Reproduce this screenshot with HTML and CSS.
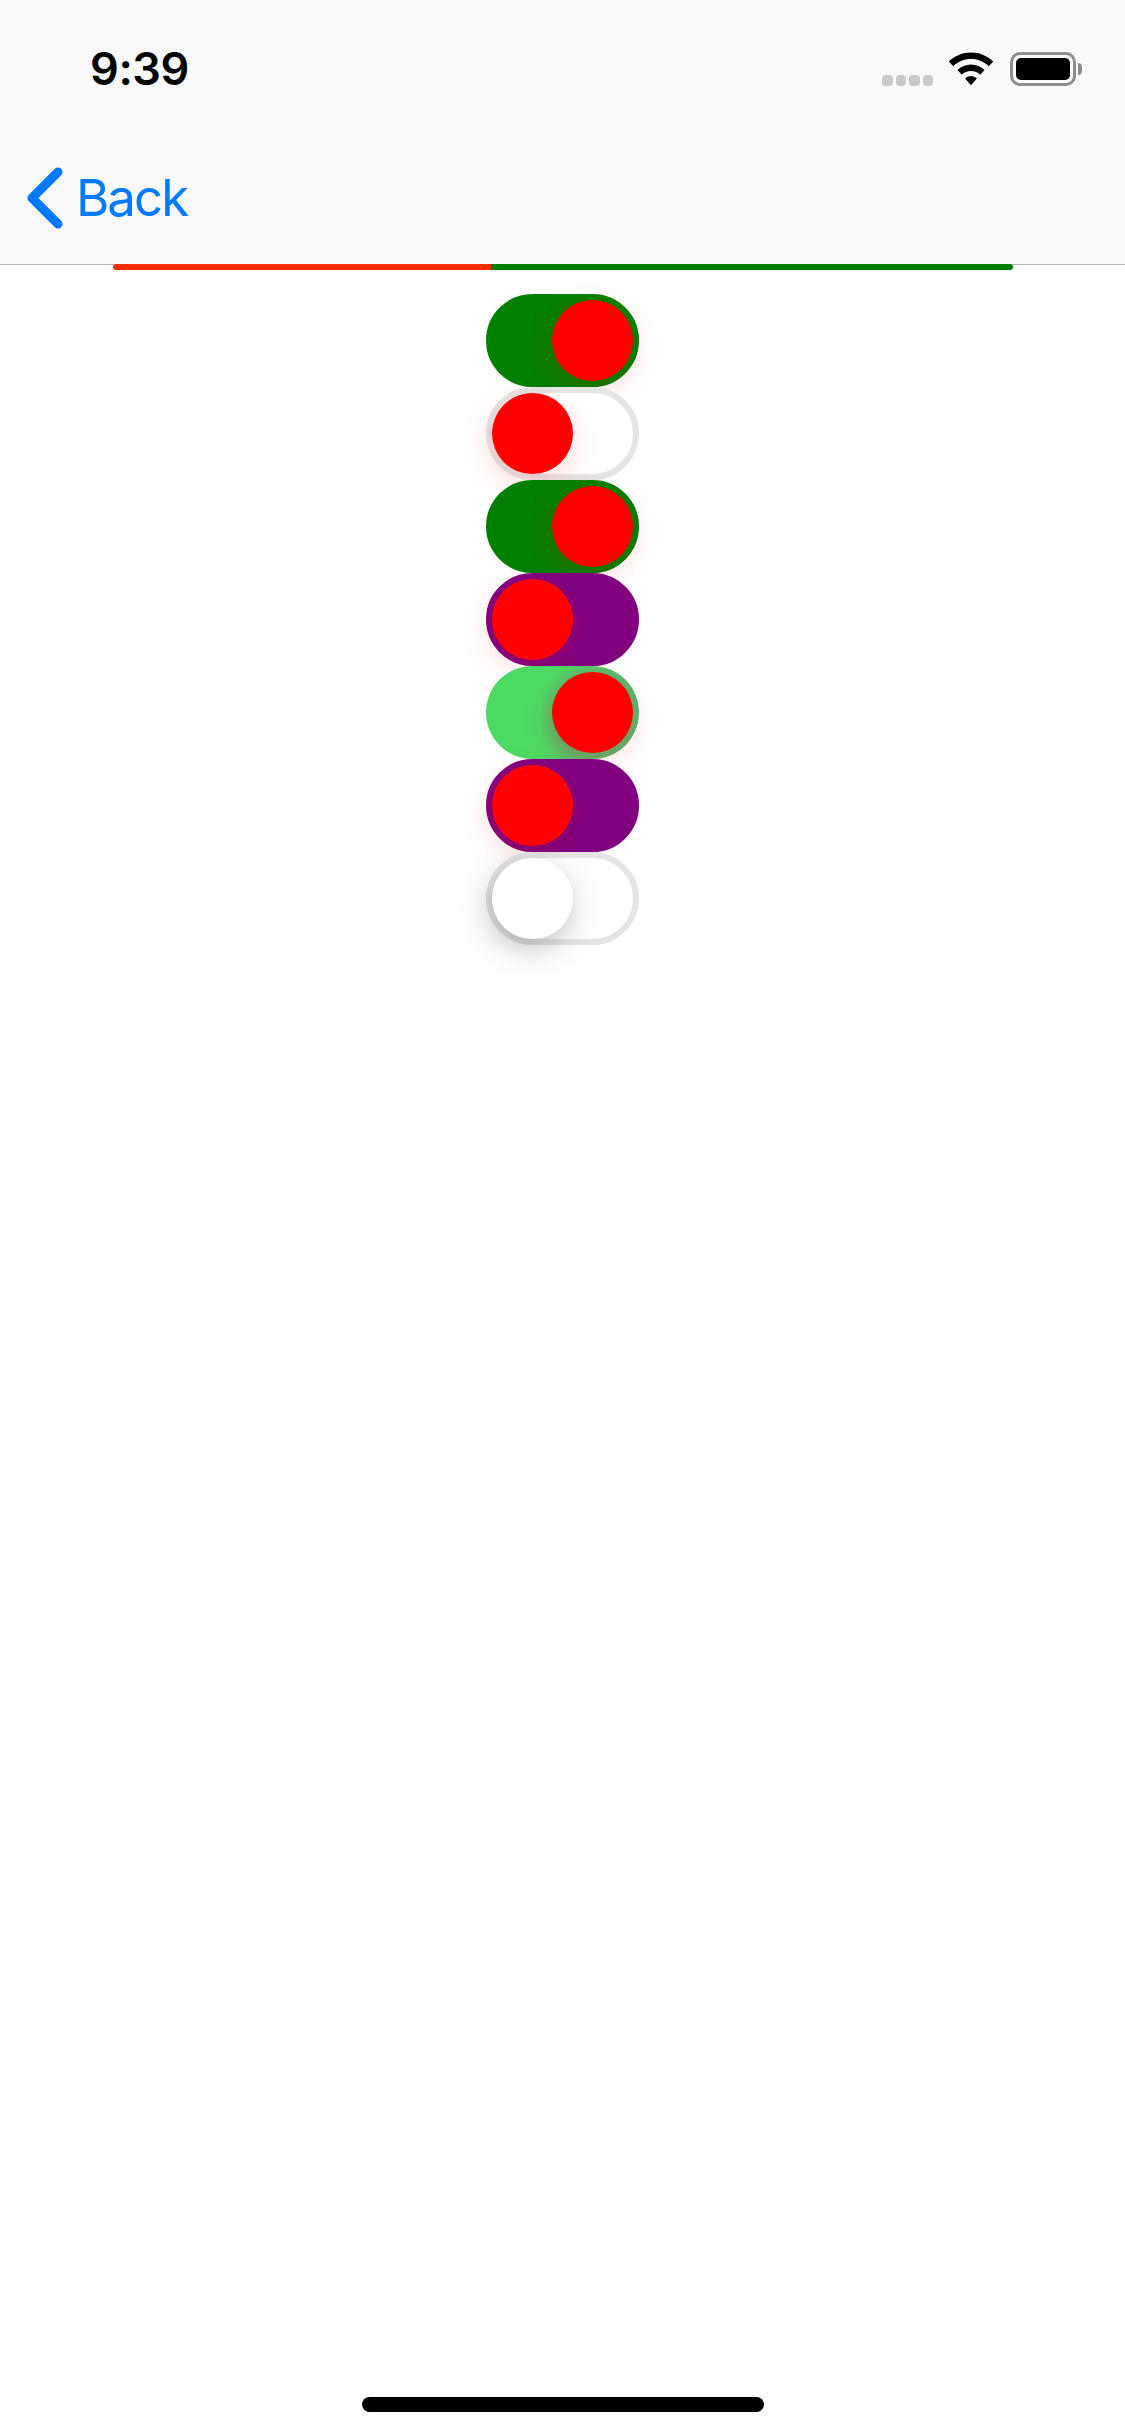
FILE: index.html
```html
<!DOCTYPE html>
<html lang="en">
<head>
<meta charset="utf-8">
<title>Switches</title>
<link rel="stylesheet" href="styles.css">
</head>
<body>
<div class="screen">
  <header class="header">
    <div class="status">
      <span class="time">9:39</span>
      <div class="status-icons">
        <div class="signal"><i></i><i></i><i></i><i></i></div>
        <svg class="wifi" width="46" height="34" viewBox="0 0 46 34"><path d="M23 0.5C14.4 0.5 6.6 3.9 0.8 9.4L5.2 14.2C9.8 9.8 16 7.1 23 7.1C30 7.1 36.200 9.8 40.800 14.200L45.200 9.400C39.400 3.900 31.600 0.500 23 0.500Z"/><path d="M23 12.500C17.800 12.500 13 14.600 9.400 18L13.800 22.700C16.200 20.400 19.400 19.100 23 19.100C26.600 19.100 29.800 20.400 32.200 22.700L36.600 18C33 14.600 28.200 12.500 23 12.500Z"/><path d="M23 24C20.700 24 18.600 24.900 17.100 26.400L23 33.200L28.900 26.400C27.400 24.900 25.300 24 23 24Z"/></svg>
        <div class="battery"><div class="battery-body"><div class="battery-fill"></div></div><div class="battery-tip"></div></div>
      </div>
    </div>
    <div class="nav">
      <svg class="chevron" width="42" height="66" viewBox="0 0 42 66"><path d="M35 7L9 33L35 59" fill="none" stroke="#007aff" stroke-width="9" stroke-linecap="round" stroke-linejoin="round"/></svg>
      <span class="back">Back</span>
    </div>
  </header>
  <main class="content">
    <div class="progress"><div class="progress-red"></div><div class="progress-green"></div></div>
    <div class="switches">
      <div class="track on green"><div class="knob red"></div></div>
      <div class="track off blank"><div class="knob red"></div></div>
      <div class="track on green"><div class="knob red"></div></div>
      <div class="track off purple"><div class="knob red"></div></div>
      <div class="track on mint"><div class="knob red"></div></div>
      <div class="track off purple"><div class="knob red"></div></div>
      <div class="track off blank"><div class="knob white"></div></div>
    </div>
  </main>
  <div class="home-area"><div class="home-indicator"></div></div>
</div>
</body>
</html>
```
FILE: styles.css
```css
* { box-sizing: border-box; }
html, body { margin: 0; padding: 0; background: #fff; }
.screen { width: 1125px; height: 2436px; display: flex; flex-direction: column; overflow: hidden; }
.header { height: 265px; background: #f9f9f9; border-bottom: 1px solid #b2b2b2; flex: none; }
.status { height: 132px; display: flex; justify-content: space-between; align-items: flex-start; padding: 0 43px 0 90px; }
.time { font: 600 45px/45px Inter, sans-serif; letter-spacing: -0.4px; color: #000; margin-top: 46px; }
.status-icons { display: flex; align-items: flex-start; margin-top: 52px; }
.signal { display: flex; gap: 3px; margin: 23px 15px 0 0; }
.signal i { display: block; width: 10.500px; height: 10.500px; border-radius: 4px; background: #c9c9c9; }
.wifi { display: block; fill: #000; margin-right: 16px; }
.battery { display: flex; align-items: center; height: 34px; }
.battery-body { width: 66px; height: 34px; border: 3px solid #8e8e8e; border-radius: 10px; padding: 3px; }
.battery-fill { width: 100%; height: 100%; background: #000; border-radius: 5px; }
.battery-tip { width: 4px; height: 12px; background: #8e8e8e; border-radius: 0 4px 4px 0; margin-left: 2px; }
.nav { height: 132px; display: flex; align-items: center; padding-left: 23px; }
.chevron { display: block; flex: none; }
.back { font: 400 51px/60px Inter, sans-serif; letter-spacing: -2px; color: #007aff; margin-left: 11px; }
.content { flex: 1; display: flex; flex-direction: column; align-items: center; }
.progress { width: 900px; height: 6px; margin-top: -1px; display: flex; border-radius: 3px; overflow: hidden; position: relative; }
.progress-red { width: 378px; background: #ff2d00; }
.progress-green { flex: 1; background: #008000; }
.switches { margin-top: 24px; display: flex; flex-direction: column; }
.track { width: 153px; height: 93px; border-radius: 47px; border: 6px solid; display: flex; }
.on { justify-content: flex-end; }
.off { justify-content: flex-start; }
.green { background: #008000; border-color: #008000; }
.purple { background: #800080; border-color: #800080; }
.mint { border-color: transparent; background: radial-gradient(circle at 112px 52px, #5cb56e 0, #5cb56e 42px, #4cd964 60px) border-box; }
.blank { background: #fff; border-color: #e5e5e5; }
.knob { width: 81px; height: 81px; border-radius: 50%; }
.red { background: #f00; box-shadow: -2px 9px 30px rgba(255, 0, 0, .16); }
.white { background: #fff; box-shadow: -3px 9px 30px rgba(0, 0, 0, .26); }
.home-area { height: 39px; flex: none; display: flex; justify-content: center; }
.home-indicator { width: 402px; height: 15px; border-radius: 8px; background: #000; }
```
